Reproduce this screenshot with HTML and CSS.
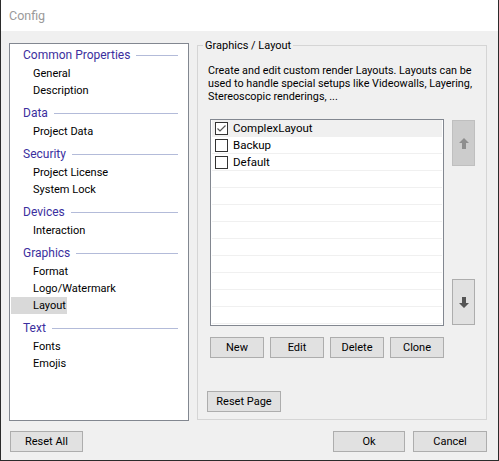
FILE: index.html
```html
<!DOCTYPE html>
<html>
<head>
<meta charset="utf-8">
<link rel="stylesheet" href="styles.css">
</head>
<body>
<div class="window">
  <div class="titlebar">Config</div>
  <div class="body">
    <div class="main">
      <div class="nav">
        <div class="section">
          <div class="head"><span>Common Properties</span><i></i></div>
          <div class="item">General</div>
          <div class="item">Description</div>
        </div>
        <div class="section">
          <div class="head"><span>Data</span><i></i></div>
          <div class="item">Project Data</div>
        </div>
        <div class="section">
          <div class="head"><span>Security</span><i></i></div>
          <div class="item">Project License</div>
          <div class="item">System Lock</div>
        </div>
        <div class="section">
          <div class="head"><span>Devices</span><i></i></div>
          <div class="item">Interaction</div>
        </div>
        <div class="section">
          <div class="head"><span>Graphics</span><i></i></div>
          <div class="item">Format</div>
          <div class="item">Logo/Watermark</div>
          <div class="item selected">Layout</div>
        </div>
        <div class="section">
          <div class="head"><span>Text</span><i></i></div>
          <div class="item">Fonts</div>
          <div class="item">Emojis</div>
        </div>
      </div>
      <div class="group">
        <div class="legend">Graphics / Layout</div>
        <div class="desc">Create and edit custom render Layouts. Layouts can be used to handle special setups like Videowalls, Layering, Stereoscopic renderings, ...</div>
        <div class="listrow">
          <div class="list">
            <div class="row active"><span class="cb checked"><svg width="11" height="11" viewBox="0 0 11 11"><polyline points="1.5,5.5 4,8 9.5,2.5" fill="none" stroke="#555" stroke-width="1.2"/></svg></span>ComplexLayout</div>
            <div class="row"><span class="cb"></span>Backup</div>
            <div class="row"><span class="cb"></span>Default</div>
            <div class="row"></div>
            <div class="row"></div>
            <div class="row"></div>
            <div class="row"></div>
            <div class="row"></div>
            <div class="row"></div>
            <div class="row"></div>
            <div class="row"></div>
            <div class="row"></div>
          </div>
          <div class="arrows">
            <div class="arrow disabled"><svg width="10" height="11" viewBox="0 0 10 11"><polygon points="5,0 10,5 7,5 7,11 3,11 3,5 0,5" fill="#8e8e8e"/></svg></div>
            <div class="arrow"><svg width="10" height="11" viewBox="0 0 10 11"><polygon points="3,0 7,0 7,6 10,6 5,11 0,6 3,6" fill="#555"/></svg></div>
          </div>
        </div>
        <div class="actions">
          <div class="btn">New</div>
          <div class="btn">Edit</div>
          <div class="btn">Delete</div>
          <div class="btn">Clone</div>
        </div>
        <div class="btn reset-page">Reset Page</div>
      </div>
    </div>
    <div class="footer">
      <div class="btn reset-all">Reset All</div>
      <div class="right">
        <div class="btn ok">Ok</div>
        <div class="btn cancel">Cancel</div>
      </div>
    </div>
  </div>
</div>
</body>
</html>
```
FILE: styles.css
```css
html, body {
  margin: 0;
  padding: 0;
  background: #ffffff;
}
body {
  font-family: Roboto, "Liberation Sans", sans-serif;
  font-size: 11px;
  color: #000;
}
.window {
  width: 499px;
  height: 461px;
  box-sizing: border-box;
  border: 1px solid #2b2b2b;
  border-top: none;
  display: flex;
  flex-direction: column;
}
.titlebar {
  height: 31px;
  flex: none;
  background: #fff;
  padding-left: 8px;
  display: flex;
  align-items: center;
  color: #9a9a9a;
  font-size: 12.5px;
}
.body {
  flex: 1;
  background: #f0f0f0;
  padding: 12px 11px 0 8px;
  display: flex;
  flex-direction: column;
}
.main {
  display: flex;
  gap: 8px;
  height: 378px;
}
.nav {
  width: 180px;
  height: 378px;
  box-sizing: border-box;
  border: 1px solid #828790;
  background: #fff;
  padding: 1px 10px 0 0;
}
.section + .section {
  margin-top: 4px;
}
.head {
  height: 20px;
  display: flex;
  align-items: center;
  padding-left: 13px;
  color: #3b2f9e;
  font-size: 12px;
}
.head i {
  flex: 1;
  height: 1px;
  background: #b3bbd9;
  margin-left: 6px;
}
.item {
  height: 17px;
  line-height: 17px;
  width: fit-content;
  margin-left: 1px;
  padding: 0 1px 0 22px;
  font-size: 11px;
}
.item.selected {
  background: #d9d9d9;
}
.group {
  width: 290px;
  height: 375px;
  margin-top: 2px;
  box-sizing: border-box;
  border: 1px solid #d5d5d5;
  padding-left: 9px;
  display: flex;
  flex-direction: column;
}
.legend {
  align-self: flex-start;
  margin: -7px 0 0 -4px;
  padding: 0 2px;
  background: #f0f0f0;
  line-height: 14px;
  height: 14px;
}
.desc {
  margin: 11px 0 0 1px;
  line-height: 13px;
  width: 270px;
  font-size: 10.8px;
}
.listrow {
  display: flex;
  gap: 8px;
  margin: 16px 0 0 3px;
}
.list {
  width: 234px;
  height: 207px;
  box-sizing: border-box;
  border: 1px solid #828790;
  background: #fff;
  padding: 0 1px;
}
.row {
  height: 16px;
  border-bottom: 1px solid #f0f0f0;
  display: flex;
  align-items: center;
  padding-left: 3px;
  font-size: 11.5px;
}
.row.active {
  background: #f0f0f0;
}
.cb {
  width: 13px;
  height: 13px;
  box-sizing: border-box;
  border: 1px solid #333;
  background: #fff;
  margin-right: 5px;
  display: flex;
  align-items: center;
  justify-content: center;
}
.arrows {
  display: flex;
  flex-direction: column;
  justify-content: space-between;
  padding: 1px 0;
}
.arrow {
  width: 23px;
  height: 46px;
  box-sizing: border-box;
  border: 1px solid #adadad;
  background: #e1e1e1;
  display: flex;
  align-items: center;
  justify-content: center;
}
.arrow.disabled {
  background: #cccccc;
  border-color: #bfbfbf;
}
.btn {
  height: 21px;
  box-sizing: border-box;
  border: 1px solid #adadad;
  background: #e1e1e1;
  display: flex;
  align-items: center;
  justify-content: center;
}
.actions {
  display: flex;
  gap: 6px;
  margin: 11px 0 0 3px;
}
.actions .btn {
  width: 54px;
}
.reset-page {
  width: 74px;
  margin-top: 33px;
}
.footer {
  margin-top: 10px;
  display: flex;
  justify-content: space-between;
}
.reset-all {
  width: 73px;
  margin-left: 1px;
}
.right {
  display: flex;
  gap: 8px;
}
.ok {
  width: 72px;
}
.cancel {
  width: 74px;
}
```
